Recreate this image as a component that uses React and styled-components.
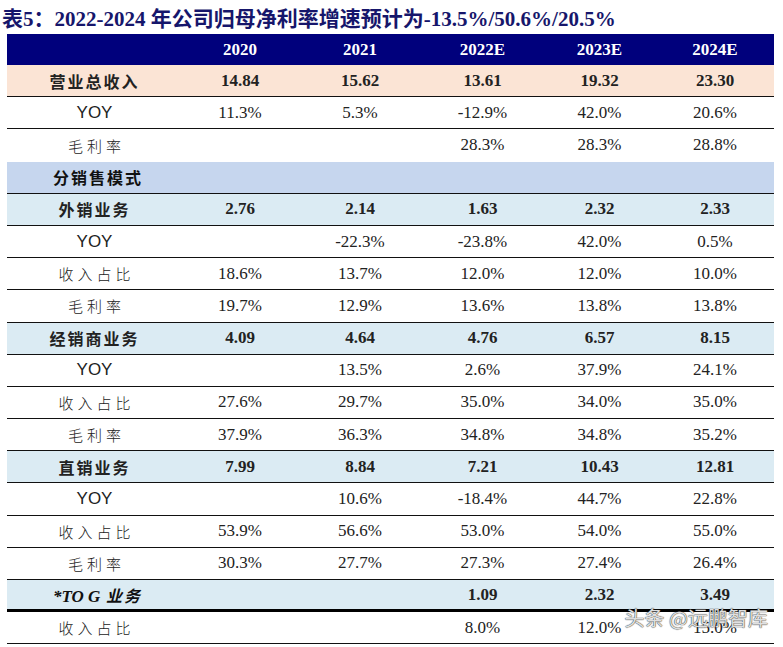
import React from 'react';
import styled, { createGlobalStyle } from 'styled-components';

const GlobalStyle = createGlobalStyle`
  body {
    margin: 0;
    background: #ffffff;
    font-family: "Liberation Serif", "Noto Sans CJK SC", serif;
  }
`;

const COLS = '175px 116px 124px 121px 113px 118px';

const header = ['2020', '2021', '2022E', '2023E', '2024E'];

const rows = [
  { label: '营业总收入', kind: 'total', values: ['14.84', '15.62', '13.61', '19.32', '23.30'] },
  { label: 'YOY', values: ['11.3%', '5.3%', '-12.9%', '42.0%', '20.6%'] },
  { label: '毛利率', values: ['', '', '28.3%', '28.3%', '28.8%'], noLine: true },
  { label: '分销售模式', kind: 'section' },
  { label: '外销业务', kind: 'group', values: ['2.76', '2.14', '1.63', '2.32', '2.33'] },
  { label: 'YOY', values: ['', '-22.3%', '-23.8%', '42.0%', '0.5%'] },
  { label: '收入占比', values: ['18.6%', '13.7%', '12.0%', '12.0%', '10.0%'] },
  { label: '毛利率', values: ['19.7%', '12.9%', '13.6%', '13.8%', '13.8%'] },
  { label: '经销商业务', kind: 'group', values: ['4.09', '4.64', '4.76', '6.57', '8.15'] },
  { label: 'YOY', values: ['', '13.5%', '2.6%', '37.9%', '24.1%'] },
  { label: '收入占比', values: ['27.6%', '29.7%', '35.0%', '34.0%', '35.0%'] },
  { label: '毛利率', values: ['37.9%', '36.3%', '34.8%', '34.8%', '35.2%'] },
  { label: '直销业务', kind: 'group', values: ['7.99', '8.84', '7.21', '10.43', '12.81'] },
  { label: 'YOY', values: ['', '10.6%', '-18.4%', '44.7%', '22.8%'] },
  { label: '收入占比', values: ['53.9%', '56.6%', '53.0%', '54.0%', '55.0%'] },
  { label: '毛利率', values: ['30.3%', '27.7%', '27.3%', '27.4%', '26.4%'] },
  { label: '*TO G 业务', kind: 'tog', values: ['', '', '1.09', '2.32', '3.49'], thick: true },
  { label: '收入占比', values: ['', '', '8.0%', '12.0%', '15.0%'] },
];

const bgFor = {
  total: '#fbe4d5',
  section: '#c6d6ee',
  group: '#dbebf3',
  tog: '#dbebf3',
};

const App = () => {
  return (
    <Page>
      <GlobalStyle />
      <Title>表5：2022-2024 年公司归母净利率增速预计为-13.5%/50.6%/20.5%</Title>
      <Table>
        <HeadRow>
          <span />
          {header.map((h) => (
            <HeadCell key={h}>{h}</HeadCell>
          ))}
        </HeadRow>
        {rows.map((r, i) => {
          const bold = r.kind && r.kind !== 'section' ? true : false;
          return (
            <Row key={i} $bg={bgFor[r.kind]} $noLine={r.noLine} $thick={r.thick}>
              {r.kind === 'section' || r.kind === 'tog' ? (
                <SideLabel $italic={r.kind === 'tog'}>
                  {r.kind === 'tog' ? (
                    <>
                      <Latin>*TO G</Latin> 业务
                    </>
                  ) : (
                    r.label
                  )}
                </SideLabel>
              ) : (
                <Label $bold={bold} $latin={r.label === 'YOY'}>
                  {r.label}
                </Label>
              )}
              {(r.values || []).map((v, j) => (
                <Cell key={j} $bold={bold}>
                  {v}
                </Cell>
              ))}
            </Row>
          );
        })}
        <Watermark>头条 @远鹏智库</Watermark>
      </Table>
    </Page>
  );
};

const Page = styled.div`
  width: 783px;
  height: 647px;
  overflow: hidden;
  display: flex;
  flex-direction: column;
`;

const Title = styled.h1`
  margin: 0;
  height: 34px;
  padding-left: 2px;
  display: flex;
  align-items: center;
  font-size: 21px;
  font-weight: 700;
  color: #16166b;
  white-space: nowrap;
  font-family: "Liberation Serif", "Noto Sans CJK SC", serif;
`;

const Table = styled.div`
  position: relative;
  margin-left: 7px;
  width: 767px;
  display: flex;
  flex-direction: column;
`;

const HeadRow = styled.div`
  display: grid;
  grid-template-columns: ${COLS};
  height: 31px;
  background: #00007c;
  align-items: center;
`;

const HeadCell = styled.div`
  text-align: center;
  color: #ffffff;
  font-weight: 700;
  font-size: 17px;
`;

const Row = styled.div`
  box-sizing: border-box;
  display: grid;
  grid-template-columns: ${COLS};
  height: 32.2px;
  align-items: center;
  background: ${({ $bg }) => $bg || '#ffffff'};
  border-bottom: ${({ $noLine, $thick }) =>
    $noLine ? 'none' : $thick ? '3px solid #000' : '1.5px solid #111'};
`;

const Label = styled.div`
  text-align: center;
  color: #222;
  font-size: ${({ $bold, $latin }) => ($bold ? '16px' : $latin ? '17px' : '15px')};
  font-weight: ${({ $bold }) => ($bold ? 700 : 300)};
  letter-spacing: ${({ $bold, $latin }) => ($latin ? '0' : $bold ? '2px' : '4px')};
  font-family: ${({ $latin }) =>
    $latin ? '"Liberation Sans", sans-serif' : '"Noto Sans CJK SC", sans-serif'};
  padding-left: ${({ $latin, $bold }) => ($latin || $bold ? '0' : '4px')};
`;

const SideLabel = styled.div`
  padding-left: 46px;
  font-weight: 700;
  font-size: 16px;
  color: #111;
  letter-spacing: 2px;
  white-space: nowrap;
  font-family: "Noto Sans CJK SC", sans-serif;
  font-style: ${({ $italic }) => ($italic ? 'italic' : 'normal')};
`;

const Latin = styled.span`
  font-family: "Liberation Serif", serif;
  font-size: 17px;
  letter-spacing: 0;
  font-style: italic;
`;

const Cell = styled.div`
  text-align: center;
  color: #222;
  font-size: 17px;
  font-weight: ${({ $bold }) => ($bold ? 700 : 400)};
`;

const Watermark = styled.div`
  position: absolute;
  right: 6px;
  bottom: 12px;
  font-family: "Noto Sans CJK SC", sans-serif;
  font-size: 20px;
  color: rgba(255, 255, 255, 0.85);
  text-shadow: 0 0 1px #333, 0 0 1px #333;
  white-space: nowrap;
  pointer-events: none;
`;

export default App;
